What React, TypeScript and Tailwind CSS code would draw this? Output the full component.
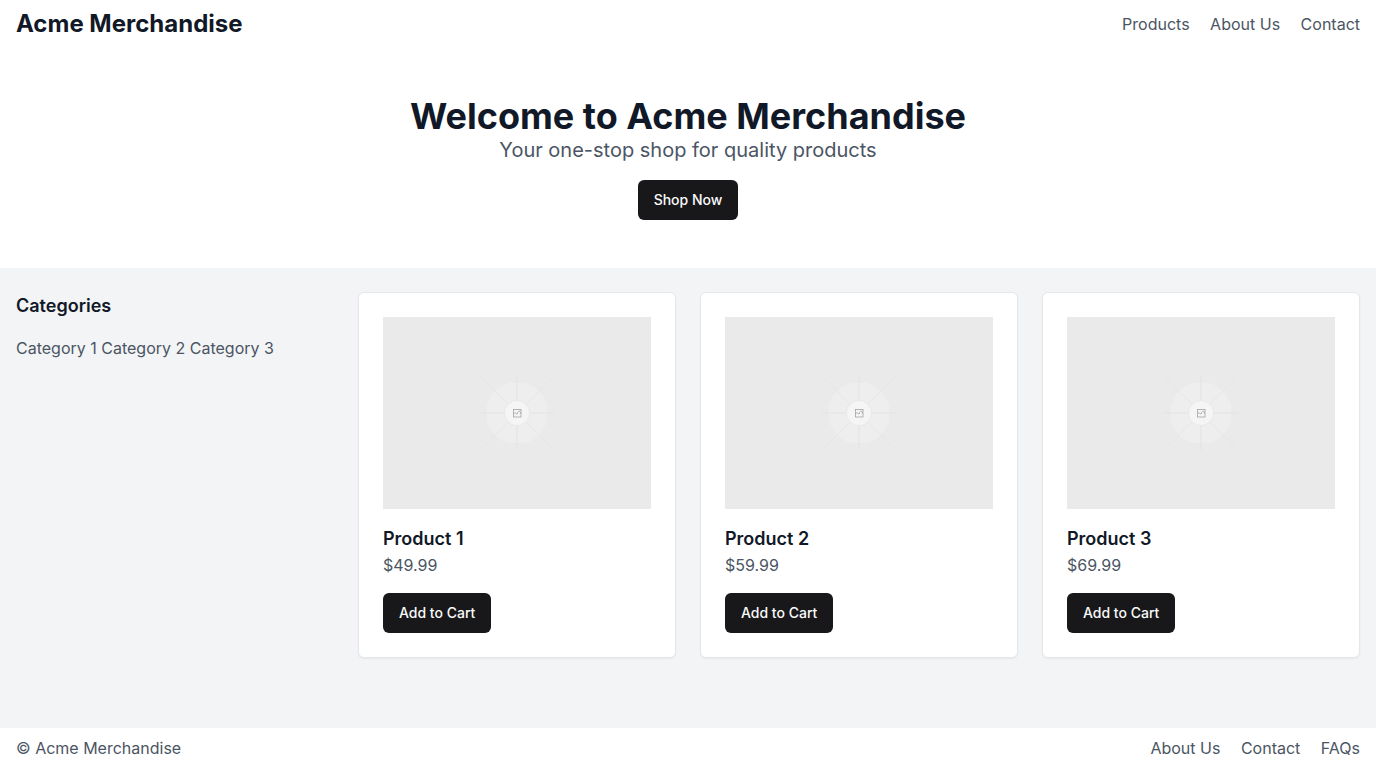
import React from "react";

const products = [
  { name: "Product 1", price: "$49.99" },
  { name: "Product 2", price: "$59.99" },
  { name: "Product 3", price: "$69.99" },
];

function Button({ children }: { children: React.ReactNode }) {
  return (
    <button
      type="button"
      className="mt-4 inline-flex h-10 items-center justify-center rounded-md bg-[#18181b] px-4 text-sm font-medium text-[#fafafa] hover:bg-[#2f2f31]"
    >
      {children}
    </button>
  );
}

function LinkRow({ label, links }: { label: string; links: string[] }) {
  return (
    <nav aria-label={label} className="text-[#4b5563]">
      {links.map((link, i) => (
        <React.Fragment key={link}>
          {i > 0 && " "}
          <a href="#" className={i > 0 ? "ml-4 hover:text-[#111827]" : "hover:text-[#111827]"}>
            {link}
          </a>
        </React.Fragment>
      ))}
    </nav>
  );
}

function Placeholder({ label }: { label: string }) {
  return (
    <svg
      role="img"
      aria-label={label}
      viewBox="-134 -96 268 192"
      preserveAspectRatio="xMidYMid slice"
      className="block h-48 w-full bg-[#eaeaea]"
      fill="none"
    >
      <circle r="31" fill="#eeeeee" />
      <path d="M-37 0H37M0 -37V37" stroke="#e3e3e3" strokeWidth="1" />
      <path d="M-36 -36L36 36M-36 36L36 -36" stroke="#e4e4e4" strokeWidth="0.9" />
      <path d="M-5 -31H5M-5 31H5M-31 -5V5M31 -5V5" stroke="#e6e6e6" strokeWidth="0.6" />
      <circle r="12.5" fill="#f5f5f5" stroke="#e4e4e4" strokeWidth="0.7" />
      <g stroke="#a3a3a3" strokeWidth="0.8">
        <rect x="-3.5" y="-3.5" width="7.5" height="7.5" />
        <path d="M-3.5 0.8L-2 -0.3L-0.3 1L0.8 0.2M0.2 0.8C0.4 -1.8 2.6 -2.4 3.4 -1V0.8" />
      </g>
    </svg>
  );
}

export default function App() {
  return (
    <div className="flex min-h-screen flex-col bg-[#f3f4f6] font-[Inter,sans-serif] text-base">
      <header className="flex items-center justify-between bg-white px-4 py-2">
        <div className="text-2xl font-bold text-[#111827]">Acme Merchandise</div>
        <LinkRow label="Main" links={["Products", "About Us", "Contact"]} />
      </header>
      <section className="bg-white px-4 py-12 text-center">
        <h1 className="text-4xl font-bold text-[#111827]">Welcome to Acme Merchandise</h1>
        <p className="text-xl text-[#4b5563]">Your one-stop shop for quality products</p>
        <Button>Shop Now</Button>
      </section>
      <main className="grid grow grid-cols-4 items-start gap-6 px-4 py-6">
        <aside>
          <h2 className="mb-4 text-lg font-semibold text-[#111827]">Categories</h2>
          <nav aria-label="Categories" className="text-[#4b5563]">
            <a href="#">Category 1</a> <a href="#">Category 2</a> <a href="#">Category 3</a>
          </nav>
        </aside>
        {products.map((product) => (
          <article
            key={product.name}
            className="rounded-md border border-[#e5e7eb] bg-white p-6 shadow-[0_1px_2px_rgba(0,0,0,0.05)]"
          >
            <Placeholder label={product.name} />
            <h2 className="mt-4 text-lg font-semibold text-[#111827]">{product.name}</h2>
            <p className="text-[#4b5563]">{product.price}</p>
            <Button>Add to Cart</Button>
          </article>
        ))}
      </main>
      <footer className="flex items-center justify-between bg-white px-4 py-2 text-[#4b5563]">
        <p>© Acme Merchandise</p>
        <LinkRow label="Footer" links={["About Us", "Contact", "FAQs"]} />
      </footer>
    </div>
  );
}
